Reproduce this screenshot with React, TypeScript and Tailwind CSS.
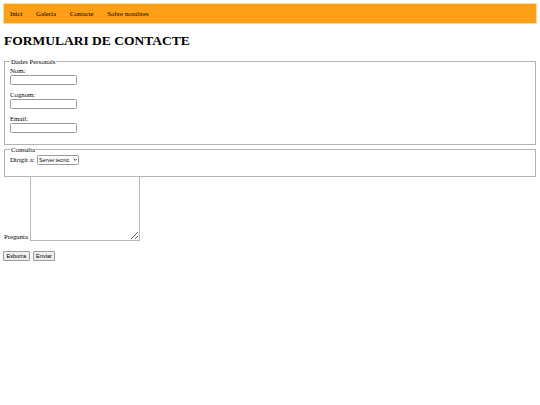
import React from "react";

export default function App() {
  const navItems = ["Inici", "Galeria", "Contacte", "Sobre nosaltres"];
  return (
    <div className="min-h-[405px] w-[540px] bg-white px-[3px] pt-[3px] font-['Liberation_Serif','Times_New_Roman',serif] text-[6.75px] leading-[8px] text-black">
      <nav className="flex h-[21px] items-center gap-[13.7px] border border-[#ffdc93] bg-[#fd9f17] pl-[6px]">
        {navItems.map((item) => (
          <a key={item} href="#" className="text-black no-underline">
            {item}
          </a>
        ))}
      </nav>

      <h1 className="mt-[9px] mb-[9px] pl-[1px] text-[13.5px] font-bold leading-[15.5px]">
        FORMULARI DE CONTACTE
      </h1>

      <form className="flex flex-col">
        <fieldset className="mx-[1px] border border-[#b3b3b3] px-[5px] pt-[1px] pb-[11px]">
          <legend className="px-[1px] leading-[8px]">Dades Personals</legend>
          <div className="flex flex-col items-start">
            <label className="block leading-[8px]">Nom:</label>
            <input
              type="text"
              className="h-[10px] w-[67px] rounded-[1.5px] border border-[#9a9a9a] bg-white"
            />
            <div className="h-[6px]" />
            <label className="block leading-[8px]">Cognom:</label>
            <input
              type="text"
              className="h-[10px] w-[67px] rounded-[1.5px] border border-[#9a9a9a] bg-white"
            />
            <div className="h-[6px]" />
            <label className="block leading-[8px]">Email:</label>
            <input
              type="email"
              className="h-[10px] w-[67px] rounded-[1.5px] border border-[#9a9a9a] bg-white"
            />
          </div>
        </fieldset>

        <fieldset className="mx-[1px] mt-[1px] border border-[#b3b3b3] px-[5px] pt-[1px] pb-[11px]">
          <legend className="px-[1px] leading-[8px]">Consulta</legend>
          <div className="flex h-[10px] items-center gap-[2px]">
            <label>Dirigit a:</label>
            <div className="relative">
              <select className="h-[10px] w-[42px] appearance-none rounded-[1.5px] border border-[#9a9a9a] bg-white pl-[1.5px] pr-[6px] font-['Liberation_Sans',Arial,sans-serif] text-[5.3px] leading-[8px] text-black">
                <option>Servei tecnic</option>
              </select>
              <svg
                className="pointer-events-none absolute top-[3.5px] right-[1.5px] h-[3px] w-[4.5px]"
                viewBox="0 0 10 6"
                fill="none"
                stroke="#222"
                strokeWidth="2"
              >
                <path d="M1 1l4 4 4-4" />
              </svg>
            </div>
          </div>
        </fieldset>

        <div className="-mt-[0.5px] flex items-end pl-[1px]">
          <label className="mb-[0.5px] leading-[8px]">Pregunta</label>
          <textarea className="ml-[1.7px] h-[65px] w-[110px] resize border border-[#b8b8b8] bg-white" />
        </div>

        <div className="mt-[9.5px] flex gap-[3px] font-['Liberation_Sans',Arial,sans-serif] text-[5.6px]">
          <button
            type="reset"
            className="h-[10px] rounded-[1px] border border-[#9a9a9a] bg-[#efefef] px-[2.5px] leading-[8px] text-black"
          >
            Esborra
          </button>
          <button
            type="button"
            className="h-[10px] rounded-[1px] border border-[#9a9a9a] bg-[#efefef] px-[2.5px] leading-[8px] text-black"
          >
            Enviar
          </button>
        </div>
      </form>
    </div>
  );
}
